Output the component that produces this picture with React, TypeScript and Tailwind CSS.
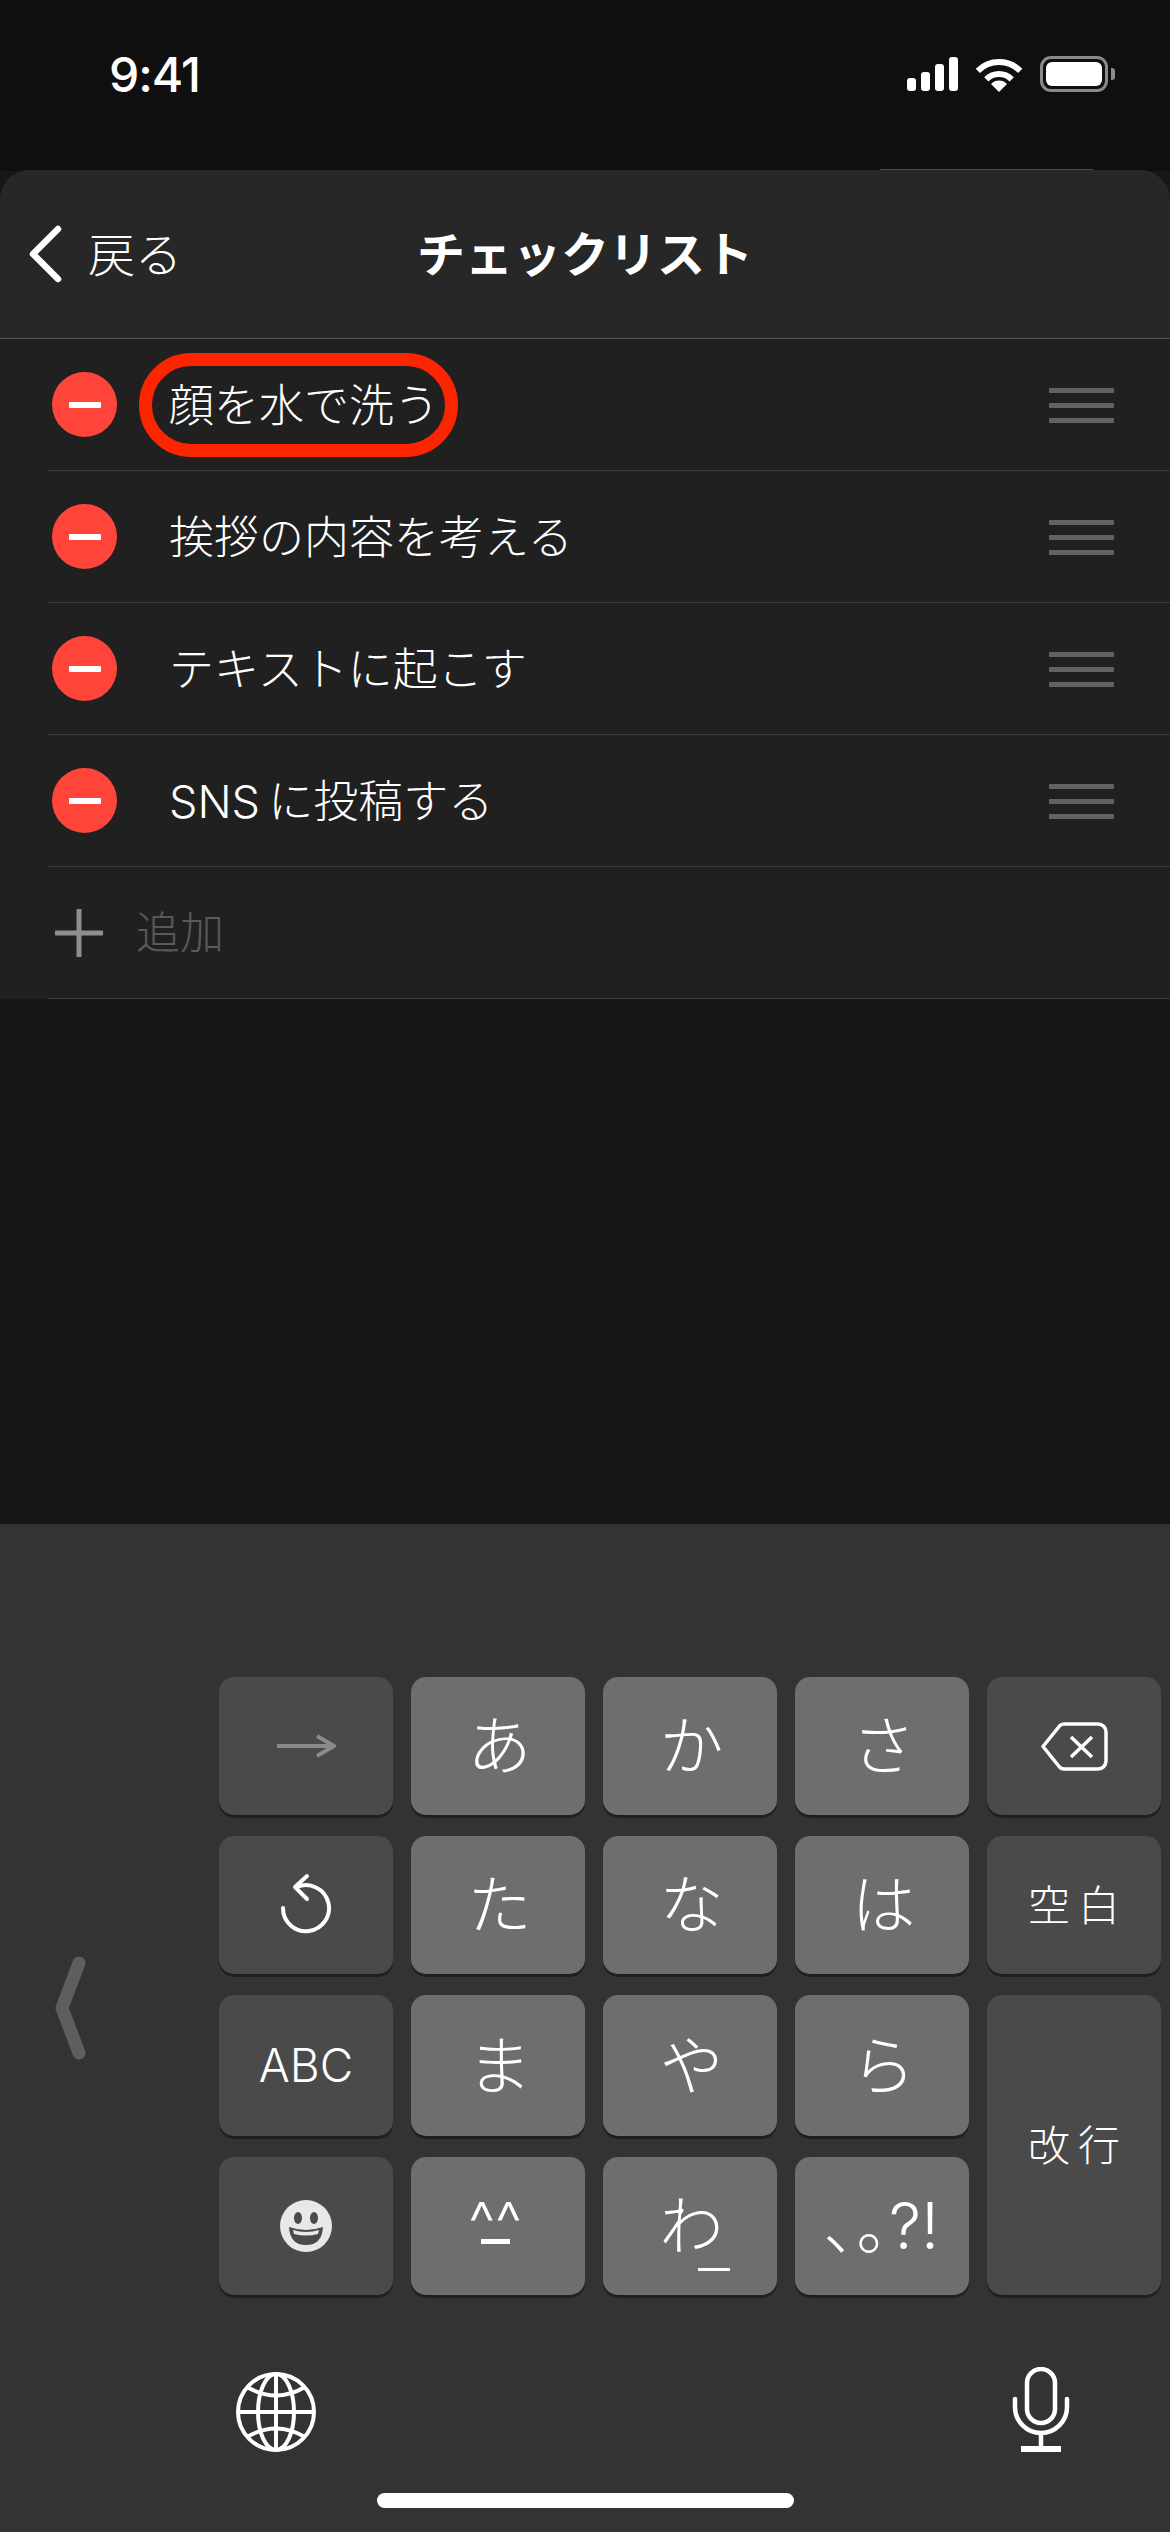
import React from 'react';

const rows = [
    { label: '顔を水で洗う', marked: true },
    { label: '挨拶の内容を考える', marked: false },
    { label: 'テキストに起こす', marked: false },
    { label: 'SNS\u2009に投稿する', marked: false },
];

const StatusIcons = () => (
    <div className="flex items-center">
        <div className="flex items-end gap-[5px] h-[34px]">
            <div className="w-[9px] h-[13px] rounded-[3px] bg-white" />
            <div className="w-[9px] h-[19px] rounded-[3px] bg-white" />
            <div className="w-[9px] h-[27px] rounded-[3px] bg-white" />
            <div className="w-[9px] h-[34px] rounded-[3px] bg-white" />
        </div>
        <svg className="ml-[17px]" width="48" height="36" viewBox="0 0 48 36" fill="none">
            <path d="M2.8 14.8A30 30 0 0 1 45.2 14.8" stroke="white" strokeWidth="6" />
            <path d="M11.3 23.3A18 18 0 0 1 36.7 23.3" stroke="white" strokeWidth="6" />
            <path d="M24 36L16 28A11 11 0 0 1 32 28Z" fill="white" />
        </svg>
        <div className="ml-[17px] w-[68px] h-[36px] rounded-[11px] border-[3px] border-[#8a8a8a] p-[3px]">
            <div className="w-full h-full rounded-[6px] bg-white" />
        </div>
        <div className="ml-[3px] w-[4px] h-[12px] rounded-r-[3px] bg-[#8a8a8a]" />
    </div>
);

const Key = ({ children, dark, className = '' }: { children: React.ReactNode; dark?: boolean; className?: string }) => (
    <div
        className={`flex items-center justify-center rounded-[15px] text-white shadow-[0_3px_0_#1f1f1f] ${dark ? 'bg-[#4a4a4a]' : 'bg-[#6e6e6e] text-[64px] font-light pl-[3px]'} ${className}`}
    >
        {children}
    </div>
);

export default function App() {
    return (
        <div className="relative w-[1170px] h-[2532px] flex flex-col overflow-hidden bg-[#171717] text-white font-['Inter','Noto_Sans_CJK_JP',sans-serif]">
            <div className="h-[171px] bg-[#0f0f0f] flex items-start justify-between pt-[48px] pl-[109px] pr-[55px]">
                <div className="text-[48px] leading-[54px] font-medium tracking-[-1px]">9:41</div>
                <div className="pt-[8px]">
                    <StatusIcons />
                </div>
            </div>

            {/* sheet */}
            <div className="bg-[#202020] rounded-t-[30px] -mt-px">
                <div className="relative h-[169px] grid grid-cols-[1fr_auto_1fr] items-center rounded-t-[30px] bg-[#272727] border-b border-[#555555]">
                    <div className="absolute left-[880px] -top-px w-[213px] h-px bg-[#4a4a4a]" />
                    <div className="flex items-center pl-[28px]">
                        <svg width="34" height="58" viewBox="0 0 34 58" fill="none">
                            <path d="M30 4L5 29L30 54" stroke="white" strokeWidth="6.5" strokeLinecap="round" strokeLinejoin="round" />
                        </svg>
                        <span className="ml-[26px] pt-[2px] text-[47px] leading-[54px] font-light">戻る</span>
                    </div>
                    <div className="pt-[2px] text-[48px] leading-[54px] font-bold">チェックリスト</div>
                    <div />
                </div>

                {rows.map((row) => (
                    <div key={row.label} className="pl-[48px]">
                        <div className="h-[132px] flex items-center border-b border-[#3c3c3c] pr-[56px]">
                            <div className="ml-[4px] w-[65px] h-[65px] rounded-full bg-[#ff453a] flex items-center justify-center">
                                <div className="w-[32px] h-[6px] rounded-[1px] bg-white" />
                            </div>
                            <div className="relative ml-[52px] text-[45px] leading-[44px] font-light">
                                <span className="relative top-[1px]">{row.label}</span>
                                {row.marked && (
                                    <div className="absolute -left-[30px] -right-[19px] -top-[30px] -bottom-[30px] rounded-full border-[13px] border-[#fb2500]" />
                                )}
                            </div>
                            <div className="ml-auto w-[65px] pt-[2px] flex flex-col gap-[10px]">
                                <div className="h-[5px] rounded-[1px] bg-[#626262]" />
                                <div className="h-[5px] rounded-[1px] bg-[#626262]" />
                                <div className="h-[5px] rounded-[1px] bg-[#626262]" />
                            </div>
                        </div>
                    </div>
                ))}

                <div className="pl-[48px]">
                    <div className="h-[132px] flex items-center border-b border-[#3c3c3c]">
                        <svg className="ml-[7px]" width="48" height="48" viewBox="0 0 48 48" fill="none">
                            <path d="M24 1V47M1 24H47" stroke="#8e8e8e" strokeWidth="5" strokeLinecap="round" />
                        </svg>
                        <span className="ml-[33px] text-[44px] leading-[44px] font-light text-[#595959]">追加</span>
                    </div>
                </div>
            </div>

            <div className="flex-1" />

            {/* keyboard */}
            <div className="h-[1008px] bg-[#333333] flex flex-col">
                <div className="flex pt-[153px]">
                    <div className="w-[219px] pl-[53px] pt-[279px]">
                        <svg width="34" height="104" viewBox="0 0 34 104" fill="none">
                            <path d="M26 7L9 52L26 97" stroke="#5e5e5e" strokeWidth="13" strokeLinecap="round" strokeLinejoin="round" />
                        </svg>
                    </div>
                    <div className="grid grid-cols-[repeat(5,174px)] grid-rows-[138px_138px_141px_138px] gap-x-[18px] gap-y-[21px]">
                        <Key dark>
                            <svg width="60" height="24" viewBox="0 0 60 24" fill="none">
                                <path d="M1 12H58M41 2L58 12L41 22" stroke="#8a8a8a" strokeWidth="4" strokeLinejoin="round" />
                            </svg>
                        </Key>
                        <Key>あ</Key>
                        <Key>か</Key>
                        <Key>さ</Key>
                        <Key dark>
                            <svg width="68" height="49" viewBox="0 0 68 49" fill="none">
                                <path d="M24 2H58a8 8 0 0 1 8 8V39a8 8 0 0 1-8 8H24a6 6 0 0 1-4.500-2L3 24.500L19.500 4a6 6 0 0 1 4.500-2Z" stroke="white" strokeWidth="3.500" strokeLinejoin="round" />
                                <path d="M31 15L52 35M52 15L31 35" stroke="white" strokeWidth="3.500" />
                            </svg>
                        </Key>

                        <Key dark>
                            <svg width="54" height="64" viewBox="0 0 54 64" fill="none">
                                <path d="M4 35A23 23 0 1 0 18 14" stroke="white" strokeWidth="4" strokeLinecap="round" />
                                <path d="M28 3L16 14L28 26" stroke="white" strokeWidth="4" strokeLinecap="round" strokeLinejoin="round" />
                            </svg>
                        </Key>
                        <Key>た</Key>
                        <Key>な</Key>
                        <Key>は</Key>
                        <Key dark className="text-[42px] font-light tracking-[8px] pl-[8px]">空白</Key>

                        <Key dark className="text-[46px] font-light">ABC</Key>
                        <Key>ま</Key>
                        <Key>や</Key>
                        <Key>ら</Key>
                        <Key dark className="row-span-2 text-[42px] font-light tracking-[8px] pl-[8px]">改行</Key>

                        <Key dark>
                            <svg width="52" height="52" viewBox="0 0 52 52">
                                <circle cx="26" cy="26" r="26" fill="#e8e8e8" />
                                <ellipse cx="18" cy="18" rx="4" ry="6" fill="#4a4a4a" />
                                <ellipse cx="34" cy="18" rx="4" ry="6" fill="#4a4a4a" />
                                <path d="M9 27Q26 33 43 27Q42 45 26 45Q10 45 9 27Z" fill="#4a4a4a" />
                                <path d="M13 30Q26 34 39 30L38 34Q26 37 14 34Z" fill="#e8e8e8" />
                            </svg>
                        </Key>
                        <Key className="!text-[60px] !pl-0 flex-col">
                            <span className="leading-[30px] -mt-[2px] pr-[6px]">^^</span>
                            <span className="h-[5px] w-[29px] mt-[2px] -ml-[6px] bg-white" />
                        </Key>
                        <Key className="relative">
                            <span className="leading-[60px]">わ</span>
                            <span className="absolute left-[95px] top-[111px] w-[32px] h-[3px] bg-white" />
                        </Key>
                        <Key className="!text-[64px] !pl-0">､｡?!</Key>
                    </div>
                </div>

                <div className="mt-[72px] flex items-end justify-between pl-[236px] pr-[100px]">
                    <svg width="80" height="80" viewBox="0 0 80 80" fill="none" stroke="white" strokeWidth="4">
                        <circle cx="40" cy="40" r="38" />
                        <ellipse cx="40" cy="40" rx="18" ry="38" />
                        <path d="M40 2V78M2 40H78" />
                        <path d="M11 15Q40 32 69 15M11 65Q40 48 69 65" />
                    </svg>
                    <svg width="58" height="85" viewBox="0 0 58 85" fill="none" stroke="white" strokeWidth="4.500">
                        <rect x="15" y="2" width="28" height="54" rx="14" />
                        <path d="M3 32V40a26 26 0 0 0 52 0V32" strokeLinecap="round" />
                        <path d="M29 66V80" />
                        <path d="M9 82H49" strokeWidth="6" />
                    </svg>
                </div>

                <div className="mt-[41px] mx-auto w-[417px] h-[15px] rounded-full bg-white" />
            </div>
        </div>
    );
}
